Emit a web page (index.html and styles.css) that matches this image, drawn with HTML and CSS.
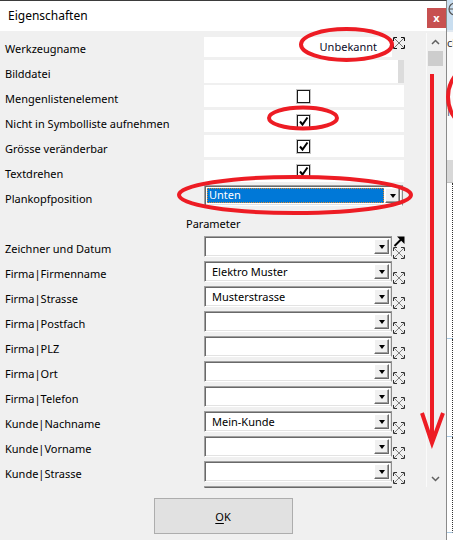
FILE: index.html
```html
<!DOCTYPE html>
<html lang="de">
<head>
<meta charset="utf-8">
<title>Eigenschaften</title>
<link rel="stylesheet" href="styles.css">
</head>
<body>
<div class="desk">
  <div class="dialog">
    <div class="titlebar">
      <span class="title">Eigenschaften</span>
      <span class="close">x</span>
    </div>
    <div class="main">
      <div class="list">
        <div class="row">
          <span class="lbl">Werkzeugname</span>
          <div class="f f-text">Unbekannt</div>
          <svg class="exp exp-top" viewBox="0 0 12 12" width="12" height="12"><path d="M0.5 4V0.5H4M11.5 4V0.5H8M0.5 8V11.5H4M11.5 8V11.5H8"/><path class="x" d="M0.5 0.5L11.5 11.5M11.5 0.5L0.5 11.5"/></svg>
        </div>
        <div class="row">
          <span class="lbl">Bilddatei</span>
          <div class="f f-wide f-file"><span class="file-sb"></span></div>
        </div>
        <div class="row">
          <span class="lbl">Mengenlistenelement</span>
          <div class="f f-wide f-cb"><span class="cb"></span></div>
        </div>
        <div class="row">
          <span class="lbl">Nicht in Symbolliste aufnehmen</span>
          <div class="f f-wide f-cb"><span class="cb"><svg viewBox="0 0 11 11" width="11" height="11"><path d="M2 5.5L4.5 8.5L9.5 1.5"/></svg></span></div>
        </div>
        <div class="row">
          <span class="lbl">Grösse veränderbar</span>
          <div class="f f-wide f-cb"><span class="cb"><svg viewBox="0 0 11 11" width="11" height="11"><path d="M2 5.5L4.5 8.5L9.5 1.5"/></svg></span></div>
        </div>
        <div class="row">
          <span class="lbl">Textdrehen</span>
          <div class="f f-wide f-cb"><span class="cb"><svg viewBox="0 0 11 11" width="11" height="11"><path d="M2 5.5L4.5 8.5L9.5 1.5"/></svg></span></div>
        </div>
        <div class="row">
          <span class="lbl">Plankopfposition</span>
          <div class="combo combo-wide"><span class="sel">Unten</span><span class="dd"></span></div>
        </div>
        <div class="row">
          <span class="param">Parameter</span>
        </div>
        <div class="row">
          <span class="lbl">Zeichner und Datum</span>
          <div class="combo"><span class="val"></span><span class="dd"></span></div>
          <div class="icons2">
            <svg class="arrow" viewBox="0 0 12 11" width="12" height="11"><path class="shaft" d="M1.5 10L9 2.5"/><path class="head" d="M4 0.5H11.5V8Z"/></svg>
            <svg class="exp grey" viewBox="0 0 12 12" width="12" height="12"><path d="M0.5 4V0.5H4M11.5 4V0.5H8M0.5 8V11.5H4M11.5 8V11.5H8"/><path class="x" d="M0.5 0.5L11.5 11.5M11.5 0.5L0.5 11.5"/></svg>
          </div>
        </div>
        <div class="row">
          <span class="lbl">Firma|Firmenname</span>
          <div class="combo"><span class="val">Elektro Muster</span><span class="dd"></span></div>
          <svg class="exp grey low" viewBox="0 0 12 12" width="12" height="12"><path d="M0.5 4V0.5H4M11.5 4V0.5H8M0.5 8V11.5H4M11.5 8V11.5H8"/><path class="x" d="M0.5 0.5L11.5 11.5M11.5 0.5L0.5 11.5"/></svg>
        </div>
        <div class="row">
          <span class="lbl">Firma|Strasse</span>
          <div class="combo"><span class="val">Musterstrasse</span><span class="dd"></span></div>
          <svg class="exp grey low" viewBox="0 0 12 12" width="12" height="12"><path d="M0.5 4V0.5H4M11.5 4V0.5H8M0.5 8V11.5H4M11.5 8V11.5H8"/><path class="x" d="M0.5 0.5L11.5 11.5M11.5 0.5L0.5 11.5"/></svg>
        </div>
        <div class="row">
          <span class="lbl">Firma|Postfach</span>
          <div class="combo"><span class="val"></span><span class="dd"></span></div>
          <svg class="exp grey low" viewBox="0 0 12 12" width="12" height="12"><path d="M0.5 4V0.5H4M11.5 4V0.5H8M0.5 8V11.5H4M11.5 8V11.5H8"/><path class="x" d="M0.5 0.5L11.5 11.5M11.5 0.5L0.5 11.5"/></svg>
        </div>
        <div class="row">
          <span class="lbl">Firma|PLZ</span>
          <div class="combo"><span class="val"></span><span class="dd"></span></div>
          <svg class="exp grey low" viewBox="0 0 12 12" width="12" height="12"><path d="M0.5 4V0.5H4M11.5 4V0.5H8M0.5 8V11.5H4M11.5 8V11.5H8"/><path class="x" d="M0.5 0.5L11.5 11.5M11.5 0.5L0.5 11.5"/></svg>
        </div>
        <div class="row">
          <span class="lbl">Firma|Ort</span>
          <div class="combo"><span class="val"></span><span class="dd"></span></div>
          <svg class="exp grey low" viewBox="0 0 12 12" width="12" height="12"><path d="M0.5 4V0.5H4M11.5 4V0.5H8M0.5 8V11.5H4M11.5 8V11.5H8"/><path class="x" d="M0.5 0.5L11.5 11.5M11.5 0.5L0.5 11.5"/></svg>
        </div>
        <div class="row">
          <span class="lbl">Firma|Telefon</span>
          <div class="combo"><span class="val"></span><span class="dd"></span></div>
          <svg class="exp grey low" viewBox="0 0 12 12" width="12" height="12"><path d="M0.5 4V0.5H4M11.5 4V0.5H8M0.5 8V11.5H4M11.5 8V11.5H8"/><path class="x" d="M0.5 0.5L11.5 11.5M11.5 0.5L0.5 11.5"/></svg>
        </div>
        <div class="row">
          <span class="lbl">Kunde|Nachname</span>
          <div class="combo"><span class="val">Mein-Kunde</span><span class="dd"></span></div>
          <svg class="exp grey low" viewBox="0 0 12 12" width="12" height="12"><path d="M0.5 4V0.5H4M11.5 4V0.5H8M0.5 8V11.5H4M11.5 8V11.5H8"/><path class="x" d="M0.5 0.5L11.5 11.5M11.5 0.5L0.5 11.5"/></svg>
        </div>
        <div class="row">
          <span class="lbl">Kunde|Vorname</span>
          <div class="combo"><span class="val"></span><span class="dd"></span></div>
          <svg class="exp grey low" viewBox="0 0 12 12" width="12" height="12"><path d="M0.5 4V0.5H4M11.5 4V0.5H8M0.5 8V11.5H4M11.5 8V11.5H8"/><path class="x" d="M0.5 0.5L11.5 11.5M11.5 0.5L0.5 11.5"/></svg>
        </div>
        <div class="row">
          <span class="lbl">Kunde|Strasse</span>
          <div class="combo"><span class="val"></span><span class="dd"></span></div>
          <svg class="exp grey low" viewBox="0 0 12 12" width="12" height="12"><path d="M0.5 4V0.5H4M11.5 4V0.5H8M0.5 8V11.5H4M11.5 8V11.5H8"/><path class="x" d="M0.5 0.5L11.5 11.5M11.5 0.5L0.5 11.5"/></svg>
        </div>
        <div class="row">
          <span class="lbl"></span>
          <div class="combo"><span class="val"></span><span class="dd"></span></div>
        </div>
      </div>
      <div class="vscroll">
        <div class="sb-btn"><svg viewBox="0 0 9 6" width="9" height="6"><path d="M1 5L4.5 1.5L8 5"/></svg></div>
        <div class="thumb"></div>
        <div class="sb-track"></div>
        <div class="sb-btn"><svg viewBox="0 0 9 6" width="9" height="6"><path d="M1 1L4.5 4.5L8 1"/></svg></div>
      </div>
    </div>
    <div class="footer">
      <button class="ok" type="button"><u>O</u>K</button>
    </div>
  </div>
  <div class="behind">
    <div class="b-top"><svg viewBox="0 0 8 16" width="8" height="16"><circle cx="8" cy="8" r="6"/><path d="M2 8H8M8 2V8"/></svg></div>
    <div class="b-panel">
      <span class="b-cl">cl</span>
      <span class="b-m">M</span>
    </div>
    <div class="b-band"></div>
    <div class="b-grid">
      <div class="b-cell b-c1"></div>
      <div class="b-cell b-c2"></div>
      <div class="b-cell b-c3"></div>
    </div>
  </div>
</div>
<svg class="marks" viewBox="0 0 453 540" width="453" height="540">
  <ellipse cx="346.5" cy="44.5" rx="45.5" ry="15.5"/>
  <ellipse cx="303" cy="118" rx="34" ry="10.5"/>
  <ellipse cx="295" cy="195" rx="116" ry="18"/>
  <ellipse cx="490" cy="97" rx="42" ry="38"/>
  <path d="M432 74V441"/>
  <path d="M422 413L432 443L443 413"/>
</svg>
</body>
</html>
```

FILE: styles.css
```css
* { box-sizing: border-box; }
html, body { margin: 0; padding: 0; }
body {
  width: 453px;
  height: 540px;
  overflow: hidden;
  position: relative;
  background: #ffffff;
  font-family: "Noto Sans", "Open Sans", sans-serif;
  font-size: 11px;
  color: #000;
}
.desk { display: flex; height: 540px; }

.dialog {
  width: 447px;
  flex: none;
  display: flex;
  flex-direction: column;
  background: #f0f0f0;
  border-top: 1px solid #3b3b3b;
  border-right: 1px solid #8a8a8a;
}
.titlebar {
  height: 30px;
  flex: none;
  background: #ffffff;
  display: flex;
  justify-content: space-between;
  align-items: flex-start;
  padding-left: 8px;
}
.title { font-size: 12px; line-height: 30px; color: #000; }
.close {
  width: 19px;
  height: 20px;
  margin-top: 7px;
  margin-right: 0;
  background: #c75050;
  color: #fff;
  font-size: 11px;
  font-weight: bold;
  line-height: 19px;
  text-align: center;
}

.main { height: 457px; flex: none; display: flex; }
.list { width: 426px; flex: none; overflow: hidden; padding-top: 5px; }

.row {
  display: grid;
  grid-template-columns: 204px 188px 14px;
  height: 25px;
  align-items: start;
}
.lbl { padding-left: 5px; line-height: 25px; white-space: nowrap; }
.param { grid-column: 1 / -1; padding-left: 186px; line-height: 25px; }

.f { background: #fff; }
.f-text {
  margin-top: 1px;
  height: 20px;
  line-height: 20px;
  text-align: right;
  padding-right: 15px;
  color: #0a0a28;
}
.f-wide { grid-column: 2 / 4; width: 200px; margin-top: -1px; height: 22px; }
.f-file { display: flex; justify-content: flex-end; margin-top: -1px; height: 23px; }
.file-sb { width: 6px; height: 100%; background: #dcdcdc; }
.f-cb { display: flex; align-items: center; justify-content: center; padding-right: 1px; }
.cb {
  width: 13px;
  height: 13px;
  background: #fff;
  border: 1px solid #1a1a1a;
  box-shadow: 0 0 0 1px #c4c4c4;
  display: flex;
}
.cb svg path { fill: none; stroke: #000; stroke-width: 2; }

.exp { display: block; margin-left: 1px; }
.exp path { fill: none; stroke: #111; stroke-width: 1; }
.exp path.x { stroke: #707070; }
.exp-top { margin-top: 1px; }
.exp.grey path { stroke: #333; }
.exp.grey path.x { stroke: #808080; }
.low { margin-top: 11px; }
.icons2 { display: flex; flex-direction: column; margin-left: 1px; }
.icons2 .exp { margin-left: 0; }
.arrow { display: block; }
.arrow .shaft { stroke: #000; stroke-width: 2; fill: none; }
.arrow .head { fill: #000; }

.combo {
  position: relative;
  height: 21px;
  background: #fff;
  border-top: 1px solid #a0a0a0;
  border-left: 1px solid #a0a0a0;
  border-bottom: 1px solid #ffffff;
  border-right: 1px solid #8d8d8d;
  box-shadow: inset 1px 1px 0 #696969, inset -1px -1px 0 #e3e3e3;
  display: flex;
  align-items: center;
  padding: 2px;
}
.combo-wide { grid-column: 2 / 4; width: 199px; margin-top: -1px; }
.val { flex: 1; padding-left: 5px; line-height: 16px; color: #000; }
.sel {
  flex: 1;
  align-self: stretch;
  margin: 0 1px 0 0;
  background: #0078d7;
  color: #fff;
  padding-left: 2px;
  line-height: 14px;
  outline: 1px dotted #e08a2c;
  outline-offset: -1px;
}
.dd {
  width: 15px;
  height: 15px;
  flex: none;
  background: #f0f0f0;
  border-top: 1px solid #fff;
  border-left: 1px solid #fff;
  border-right: 1px solid #696969;
  border-bottom: 1px solid #696969;
  box-shadow: inset -1px -1px 0 #a0a0a0;
  display: flex;
  align-items: center;
  justify-content: center;
}
.dd::after {
  content: "";
  width: 0;
  height: 0;
  border-left: 3.5px solid transparent;
  border-right: 3.5px solid transparent;
  border-top: 4px solid #000;
  margin-top: 1px;
}

.vscroll {
  width: 18px;
  flex: none;
  margin-top: 2px;
  height: 454px;
  margin-right: 2px;
  border-left: 1px solid #fafafa;
  display: flex;
  flex-direction: column;
  background: #f0f0f0;
}
.sb-btn { height: 17px; display: flex; align-items: center; justify-content: center; flex: none; }
.sb-btn svg path { fill: none; stroke: #606060; stroke-width: 1.5; }
.thumb { height: 15px; margin: 1px 1px 0 1px; background: #cdcdcd; flex: none; }
.sb-track { flex: 1; }

.footer { display: flex; justify-content: center; padding-top: 10px; }
.ok {
  width: 139px;
  height: 36px;
  background: #e1e1e1;
  border: 1px solid #adadad;
  font-family: "Noto Sans", "Open Sans", sans-serif;
  font-size: 11px;
  color: #000;
  padding: 0;
}
.ok u { text-decoration-thickness: 1px; text-underline-offset: 2px; }

.behind { width: 6px; flex: none; display: flex; flex-direction: column; overflow: hidden; background: #fff; }
.b-top { height: 30px; background: #c9def0; flex: none; padding-top: 1px; }
.b-top svg circle, .b-top svg path { fill: none; stroke: #555; stroke-width: 1.2; }
.b-panel { height: 130px; flex: none; display: flex; flex-direction: column; background: #fbfbfb; border-top: 2px solid #e0e8f0; }
.b-cl { font-size: 11px; color: #333; line-height: 14px; margin-top: 4px; white-space: nowrap; }
.b-m { font-size: 11px; color: #4a5878; line-height: 14px; margin-top: 55px; }
.b-band { height: 23px; flex: none; background: #d8d8d8; border-bottom: 1px solid #c0c0c0; }
.b-grid { flex: 1; display: flex; flex-direction: column; }
.b-cell { border-right: 1px dotted #333; border-bottom: 1px solid #a9c9e3; flex: none; }
.b-c1 { height: 156px; margin-top: 0; }
.b-c2 { height: 98px; }
.b-c3 { height: 96px; }

.marks { position: absolute; left: 0; top: 0; pointer-events: none; }
.marks ellipse, .marks path { fill: none; stroke: #ed1c24; stroke-width: 4; }
```
